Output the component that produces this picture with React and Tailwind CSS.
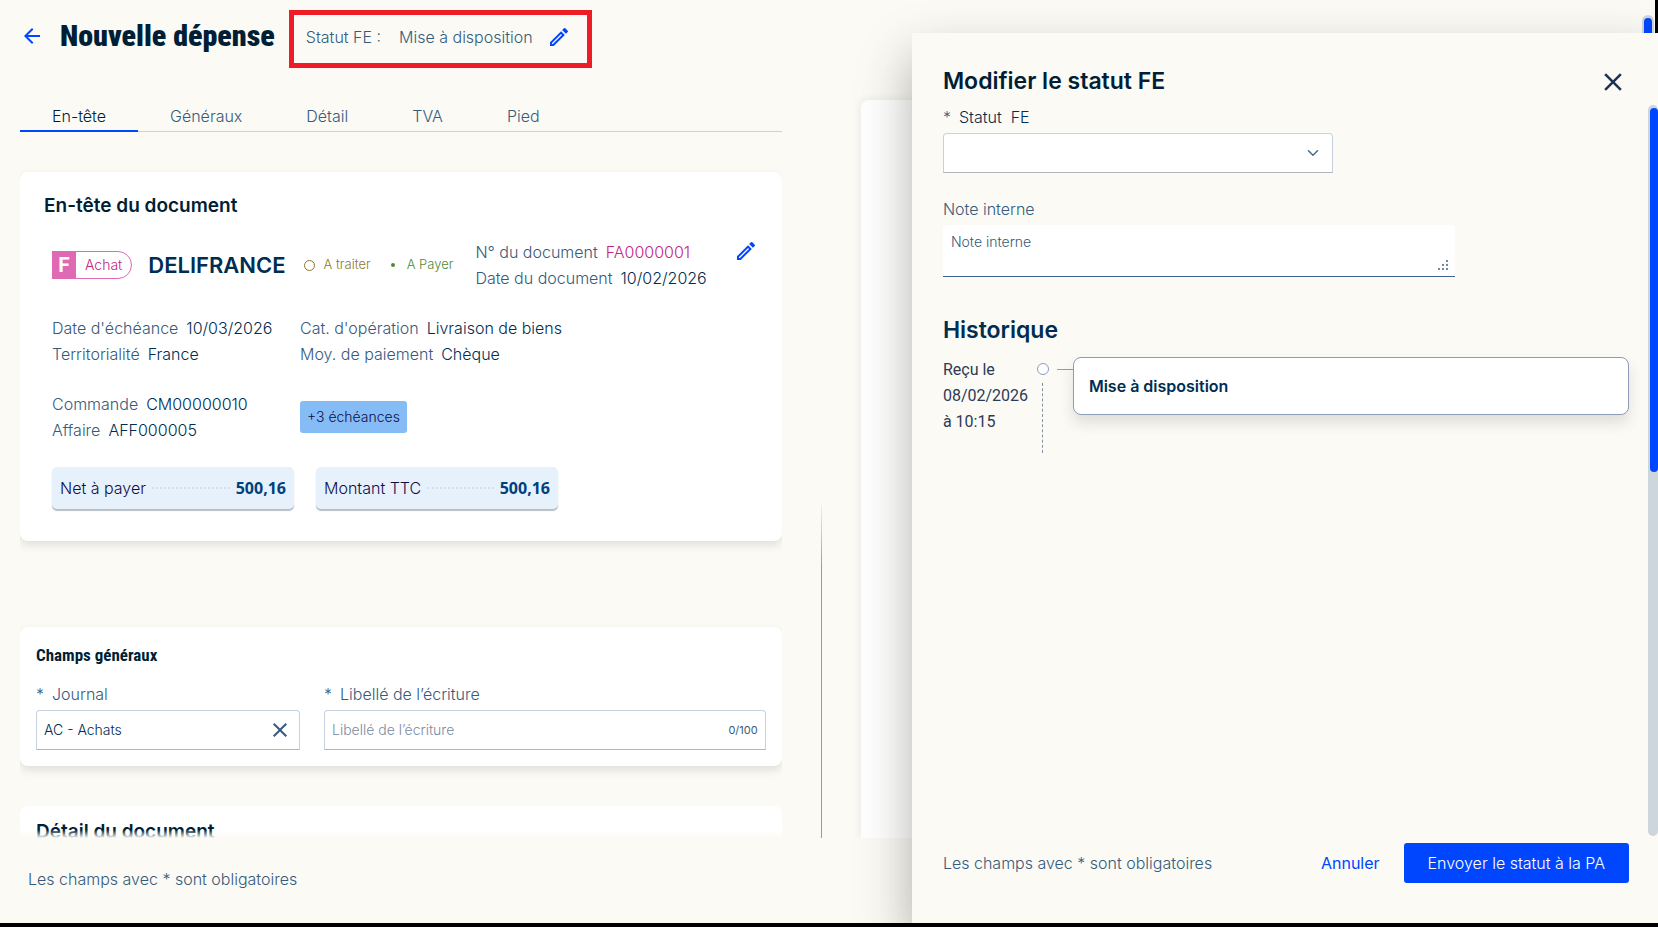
import { useState } from "react";
import { MdArrowBack, MdOutlineModeEdit, MdClose } from "react-icons/md";
import { ChevronDown } from "lucide-react";

const TABS = ["En-tête", "Généraux", "Détail", "TVA", "Pied"];

function Field({ label, value, pink }) {
  return (
    <p className="flex gap-2 whitespace-nowrap text-[#365a7c]">
      <span>{label}</span>
      <span className={pink ? "text-[#c4267f]" : "text-[#002d52]"}>{value}</span>
    </p>
  );
}

function Amount({ label, value }) {
  return (
    <div className="flex h-[42px] items-center gap-1.5 rounded-[5px] bg-[#e6f1fc] px-2 shadow-[0_2px_1px_#b9bec4]">
      <span className="whitespace-nowrap text-[#100c48]">{label}</span>
      <span className="flex-1 border-b-2 border-dotted border-[#d5e0eb]" />
      <span className="font-['Noto_Sans'] text-base font-bold text-[#00407c]">{value}</span>
    </div>
  );
}

function Tabs() {
  const [active, setActive] = useState(TABS[0]);

  return (
    <nav className="flex h-8 shrink-0 border-b border-[#c6d2de]">
      {TABS.map((tab) => (
        <button
          key={tab}
          onClick={() => setActive(tab)}
          className={
            tab === active
              ? "-mb-px h-8 border-b-2 border-[#0046fe] px-8 pt-0.5 text-[#001f36]"
              : "-mb-px h-8 border-b-2 border-transparent px-8 pt-0.5 text-[#365a7c]"
          }
        >
          {tab}
        </button>
      ))}
    </nav>
  );
}

function DocumentCard() {
  return (
    <section className="shrink-0 rounded-lg bg-white pt-5 pr-6 pb-8 pl-8 shadow-[0_4px_8px_rgba(60,60,40,0.14)]">
      <h2 className="-ml-2 text-[19px]/[27px] font-semibold text-[#001f36]">En-tête du document</h2>

      <div className="mt-5 flex items-start">
        <div className="flex h-[52px] items-center">
          <span className="flex h-7 items-center rounded-r-full border border-[#e069b4] text-sm text-[#c4267f]">
            <span className="-ml-px flex h-7 w-6 items-center justify-center bg-[#e069b4] text-xl font-bold text-white">
              F
            </span>
            <span className="px-[9px]">Achat</span>
          </span>
          <span className="ml-4 text-[22px] font-semibold text-[#002d52]">DELIFRANCE</span>
          <span className="ml-[18px] flex items-center gap-[9px] text-[13px] whitespace-nowrap text-[#93762c]">
            <i className="size-[11px] rounded-full border border-[#93762c]" />A traiter
          </span>
          <span className="ml-5 flex items-center gap-3 text-[13px] whitespace-nowrap text-[#4d8b3a]">
            <i className="size-1 rounded-full bg-[#4d8b3a]" />A Payer
          </span>
        </div>
        <div className="ml-[22px] leading-[26px]">
          <Field label="N° du document" value="FA0000001" pink />
          <Field label="Date du document" value="10/02/2026" />
        </div>
        <button aria-label="Modifier l'en-tête" className="ml-auto text-[#0046fe]">
          <MdOutlineModeEdit size={24} />
        </button>
      </div>

      <div className="mt-6 grid w-[506px] grid-cols-[248px_1fr] gap-y-6 leading-[26px]">
        <div>
          <Field label="Date d'échéance" value="10/03/2026" />
          <Field label="Territorialité" value="France" />
        </div>
        <div>
          <Field label="Cat. d'opération" value="Livraison de biens" />
          <Field label="Moy. de paiement" value="Chèque" />
        </div>
        <div>
          <Field label="Commande" value="CM00000010" />
          <Field label="Affaire" value="AFF000005" />
        </div>
        <button className="h-8 w-[107px] self-center rounded-[3px] bg-[#86bcf5] text-sm whitespace-nowrap text-[#100c48]">
          +3 échéances
        </button>
      </div>

      <div className="mt-6 grid w-[506px] grid-cols-2 gap-[22px]">
        <Amount label="Net à payer" value="500,16" />
        <Amount label="Montant TTC" value="500,16" />
      </div>
    </section>
  );
}

function GeneralFields() {
  return (
    <section className="mt-[86px] shrink-0 rounded-lg bg-white p-4 shadow-[0_4px_8px_rgba(60,60,40,0.14)]">
      <h2 className="font-['Roboto_Condensed','Liberation_Sans_Narrow','Roboto'] text-[17px]/6 font-bold text-[#001f36]">
        Champs généraux
      </h2>
      <div className="mt-[11px] flex gap-6">
        <div className="w-[264px]">
          <label htmlFor="journal" className="flex h-8 items-center gap-2 text-[#365a7c]">
            <span>*</span>Journal
          </label>
          <div className="flex h-10 items-center rounded-t-[4px] border border-[#c6d2de] border-b-[#b3b6b9] px-[7px]">
            <input
              id="journal"
              defaultValue="AC - Achats"
              className="min-w-0 flex-1 text-sm text-[#002d52] outline-none"
            />
            <button aria-label="Effacer" className="text-[#365a7c]">
              <MdClose size={24} />
            </button>
          </div>
        </div>
        <div className="flex-1">
          <label htmlFor="libelle" className="flex h-8 items-center gap-2 text-[#365a7c]">
            <span>*</span>Libellé de l’écriture
          </label>
          <div className="flex h-10 items-center rounded-t-[4px] border border-[#c6d2de] border-b-[#b3b6b9] px-[7px]">
            <input
              id="libelle"
              placeholder="Libellé de l’écriture"
              className="min-w-0 flex-1 text-sm outline-none placeholder:text-[#7b8b9f]"
            />
            <span className="text-[11px] font-normal text-[#365a7c]">0/100</span>
          </div>
        </div>
      </div>
    </section>
  );
}

function StatusDrawer() {
  return (
    <aside className="absolute top-[33px] right-0 bottom-0 flex w-[45%] flex-col bg-[#fbfaf5] pl-[31px] shadow-[0_24px_48px_rgba(40,40,30,0.36)]">
      <header className="flex h-[68px] shrink-0 items-end justify-between pr-[30px] pb-1">
        <h2 className="text-[23px]/8 font-semibold text-[#001f36]">Modifier le statut FE</h2>
        <button aria-label="Fermer" className="text-[#1f3350]">
          <MdClose size={30} />
        </button>
      </header>

      <div className="flex min-h-0 flex-1 justify-between pt-1">
        <div className="min-w-0 flex-1 overflow-hidden pr-[19px]">
          <label htmlFor="statut" className="mb-1 flex h-6 items-center gap-2 text-[#002d52]">
            <span className="text-[#365a7c]">*</span>
            <span className="whitespace-pre">Statut  FE</span>
          </label>
          <div className="relative w-[390px]">
            <select
              id="statut"
              className="h-10 w-full appearance-none rounded-t-[4px] border border-[#c6d2de] border-b-[#b3b6b9] bg-white px-2"
            >
              <option></option>
            </select>
            <ChevronDown size={18} className="pointer-events-none absolute top-[11px] right-[11px] text-[#4b6a8a]" />
          </div>

          <label htmlFor="note" className="mt-6 mb-1 flex h-6 items-center text-[#365a7c]">
            Note interne
          </label>
          <div className="relative w-[512px]">
            <textarea
              id="note"
              placeholder="Note interne"
              className="block h-[52px] w-full resize-none rounded-t-[4px] border-b border-[#3c618a] bg-white px-2 py-[7px] text-sm outline-none placeholder:text-[#365a7c]"
            />
            <svg className="absolute right-1.5 bottom-1.5" width="11" height="11" fill="#6f8aa5">
              <path d="M8 0h2v2H8zM4 4h2v2H4zM8 4h2v2H8zM0 8h2v2H0zM4 8h2v2H4zM8 8h2v2H8z" />
            </svg>
          </div>

          <h3 className="mt-[37px] text-[23px]/8 font-semibold text-[#002d52]">Historique</h3>
          <div className="mt-[11px] flex items-start pb-8">
            <p className="w-[94px] font-['Roboto'] text-base leading-[26px] font-normal text-[#2b3a55]">
              Reçu le
              <br />
              08/02/2026
              <br />à 10:15
            </p>
            <div className="mt-1.5 flex flex-col items-center gap-2">
              <i className="size-3 rounded-full border border-[#8c9dbb] bg-white" />
              <i className="h-[70px] border-l border-dashed border-[#8494a8]" />
            </div>
            <i className="mt-3 ml-2 w-4 border-t border-[#8c9dbb]" />
            <div className="flex h-[58px] flex-1 items-center rounded-lg border border-[#8c9dbb] bg-white px-[15px] font-semibold text-[#002d52] shadow-[0_8px_14px_rgba(60,60,40,0.14)]">
              Mise à disposition
            </div>
          </div>
        </div>
        <div className="w-2.5 shrink-0 rounded-full bg-[#cdd5dd] pt-[3px] pl-0.5">
          <div className="h-1/2 rounded-full bg-[#0046fe]" />
        </div>
      </div>

      <footer className="flex h-[87px] shrink-0 items-start pt-[7px] pr-[29px]">
        <p className="flex h-10 flex-1 items-center text-[#365a7c]">Les champs avec * sont obligatoires</p>
        <button className="mr-6 h-10 font-normal text-[#0046fe]">Annuler</button>
        <button className="h-10 rounded-[3px] bg-[#0046fe] px-6 text-white">Envoyer le statut à la PA</button>
      </footer>
    </aside>
  );
}

export default function App() {
  return (
    <div className="relative flex h-screen flex-col overflow-hidden border-b-4 border-black bg-[#fbfaf5] font-['Inter',sans-serif] text-base font-light">
      <div className="relative flex min-h-0 flex-1 flex-col">
        <header className="flex h-[100px] shrink-0 items-start pt-[10px] pl-5">
          <button aria-label="Retour" className="flex h-[52px] items-center text-[#0046fe]">
            <MdArrowBack size={24} />
          </button>
          <h1 className="ml-4 font-['Roboto_Condensed','Liberation_Sans_Narrow','Roboto'] text-[30px]/[52px] font-black text-[#001f36]">
            Nouvelle dépense
          </h1>
          <div className="ml-3.5 flex h-[58px] items-center border-5 border-[#ee1c25] pr-4 pb-1 pl-3 text-[#365a7c]">
            <span>Statut FE :</span>
            <span className="ml-[18px]">Mise à disposition</span>
            <button aria-label="Modifier le statut" className="ml-3.5 text-[#0046fe]">
              <MdOutlineModeEdit size={24} />
            </button>
          </div>
        </header>

        <main className="flex min-h-0 flex-1 pl-5">
          <div className="flex w-[46.5%] flex-col">
            <Tabs />
            <div className="relative flex min-h-0 flex-1 flex-col overflow-hidden pt-10">
              <DocumentCard />
              <GeneralFields />
              <section className="mt-10 h-40 shrink-0 rounded-lg bg-white px-4 pt-3">
                <h2 className="text-[19px]/[27px] font-semibold text-[#001f36]">Détail du document</h2>
              </section>
              <div className="absolute inset-x-0 bottom-0 h-2 bg-linear-to-t from-[#fbfaf5] to-transparent" />
            </div>
          </div>
          <div className="ml-[39px] h-[46%] w-px self-end bg-linear-to-b from-transparent to-[#8c9dbb] to-20%" />
          <div className="ml-[39px] flex-1 rounded-tl-lg bg-white shadow-[0_0_8px_rgba(60,60,40,0.1)]" />
        </main>

        <footer className="relative flex h-[85px] shrink-0 items-center bg-[#fbfaf5] pb-1 pl-7 text-[#365a7c]">
          Les champs avec * sont obligatoires
        </footer>
      </div>

      <div className="absolute top-0 right-0 flex h-[33px] items-end bg-[#fbfaf5]">
        <div className="h-[18px] w-3 rounded-t-full bg-[#cdd5dd] px-0.5 pt-[3px]">
          <div className="h-full rounded-t-full bg-[#0046fe]" />
        </div>
        <div className="ml-px h-full w-[3px] bg-black" />
      </div>

      <StatusDrawer />
    </div>
  );
}
